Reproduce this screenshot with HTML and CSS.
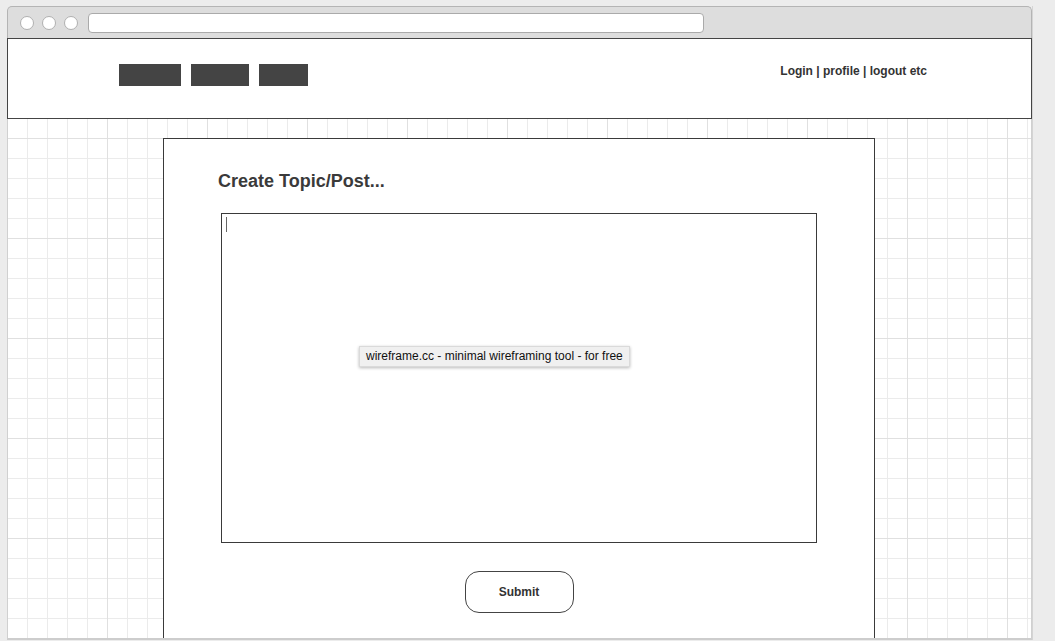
FILE: index.html
```html
<!DOCTYPE html>
<html lang="en">
<head>
<meta charset="utf-8">
<title>Create Topic/Post</title>
<link rel="stylesheet" href="styles.css">
</head>
<body>
<div class="window">
  <div class="titlebar">
    <span class="dot"></span>
    <span class="dot"></span>
    <span class="dot"></span>
    <span class="address"></span>
  </div>
  <header class="header">
    <nav class="nav">
      <span class="nav-item nav-a"></span>
      <span class="nav-item nav-b"></span>
      <span class="nav-item nav-c"></span>
    </nav>
    <div class="account">Login | profile | logout etc</div>
  </header>
  <main class="canvas">
    <section class="card">
      <h1 class="title">Create Topic/Post...</h1>
      <div class="editor"><span class="caret"></span></div>
      <button class="submit" type="button">Submit</button>
    </section>
  </main>
</div>
<div class="tooltip">wireframe.cc - minimal wireframing tool - for free</div>
</body>
</html>
```

FILE: styles.css
```css
html, body {
  margin: 0;
  padding: 0;
}

body {
  background: #ececec;
  font-family: "Liberation Sans", Arial, Helvetica, sans-serif;
  color: #333;
  width: 1055px;
  height: 641px;
  overflow: hidden;
  position: relative;
}

.window {
  margin: 6px 0 0 7px;
  width: 1025px;
  display: flex;
  flex-direction: column;
  box-shadow: 1px 0 0 #d4d4d4;
}

.titlebar {
  height: 31px;
  background: #dddddd;
  border: 1px solid #b4b4b4;
  border-bottom: none;
  border-radius: 5px 5px 0 0;
  display: flex;
  align-items: center;
  padding-left: 12px;
  gap: 8px;
}

.dot {
  width: 14px;
  height: 14px;
  box-sizing: border-box;
  border-radius: 50%;
  background: #fff;
  border: 1px solid #b0b0b0;
}

.address {
  margin-left: 2px;
  width: 616px;
  height: 20px;
  box-sizing: border-box;
  background: #fff;
  border: 1px solid #aaaaaa;
  border-radius: 4px;
}

.header {
  height: 81px;
  box-sizing: border-box;
  border: 1px solid #444;
  background: #fff;
  display: flex;
  align-items: flex-start;
  padding: 25px 104px 0 111px;
}

.nav {
  display: flex;
  gap: 10px;
}

.nav-item {
  display: block;
  height: 22px;
  background: #444;
}

.nav-a { width: 62px; }
.nav-b { width: 58px; }
.nav-c { width: 49px; }

.account {
  margin-left: auto;
  font-size: 12px;
  font-weight: bold;
  line-height: 14px;
  color: #333;
}

.canvas {
  height: 521px;
  box-sizing: border-box;
  border-left: 1px solid #d0d0d0;
  border-right: 1px solid #d0d0d0;
  border-bottom: 2px solid #cdcdcd;
  overflow: hidden;
  display: flex;
  flex-direction: column;
  align-items: flex-start;
  background-color: #fff;
  background-image:
    linear-gradient(to right, transparent 99px, #e0e0e0 99px, #e0e0e0 100px, transparent 100px),
    linear-gradient(to bottom, transparent 19px, #e0e0e0 19px, #e0e0e0 20px, transparent 20px),
    linear-gradient(to right, transparent 19px, #ebebeb 19px, #ebebeb 20px, transparent 20px),
    linear-gradient(to bottom, transparent 19px, #ebebeb 19px, #ebebeb 20px, transparent 20px);
  background-size: 100px 100px, 100px 100px, 20px 20px, 20px 20px;
}

.card {
  flex: none;
  margin: 19px 0 0 155px;
  width: 712px;
  height: 600px;
  box-sizing: border-box;
  border: 1px solid #3a3a3a;
  background: #fff;
  display: flex;
  flex-direction: column;
  align-items: flex-start;
  padding-top: 32px;
}

.title {
  margin: 0 0 0 54px;
  font-size: 18px;
  line-height: 21px;
  font-weight: bold;
  color: #3a3a3a;
}

.editor {
  margin: 21px 0 0 57px;
  width: 596px;
  height: 330px;
  box-sizing: border-box;
  border: 1px solid #3a3a3a;
  background: #fff;
}

.caret {
  display: block;
  margin: 3px 0 0 4px;
  width: 1px;
  height: 15px;
  background: #666;
}

.submit {
  align-self: center;
  margin-top: 28px;
  width: 109px;
  height: 42px;
  box-sizing: border-box;
  border: 1px solid #444;
  border-radius: 14px;
  background: #fff;
  font-family: "Liberation Sans", Arial, Helvetica, sans-serif;
  font-size: 12px;
  font-weight: bold;
  color: #333;
  padding: 0;
}

.tooltip {
  position: absolute;
  left: 359px;
  top: 346px;
  height: 21px;
  box-sizing: border-box;
  padding: 0 6px;
  background: #f0f0f0;
  border: 1px solid #dadada;
  box-shadow: 0 1px 3px rgba(0, 0, 0, 0.28);
  font-size: 12px;
  line-height: 19px;
  color: #111;
  white-space: nowrap;
}
```
